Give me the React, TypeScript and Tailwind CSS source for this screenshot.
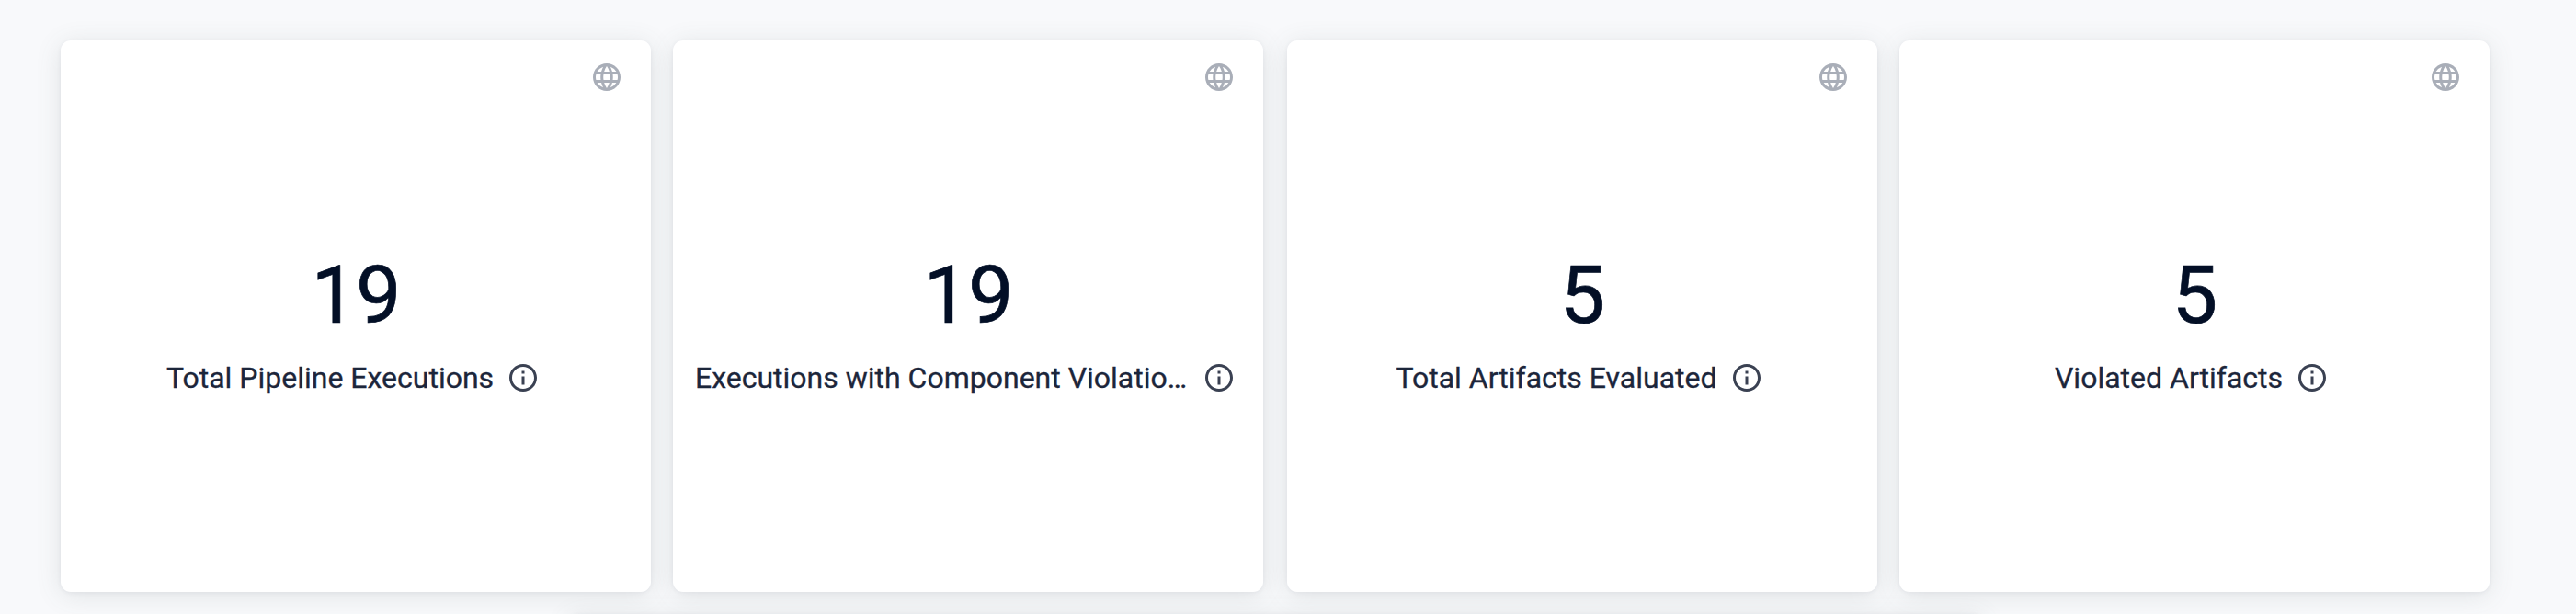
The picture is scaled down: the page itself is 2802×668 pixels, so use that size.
import { MdInfoOutline, MdLanguage } from "react-icons/md";

interface Metric {
  value: string;
  label: string;
}

const metricPairs: Metric[][] = [
  [
    { value: "19", label: "Total Pipeline Executions" },
    { value: "19", label: "Executions with Component Violations" },
  ],
  [
    { value: "5", label: "Total Artifacts Evaluated" },
    { value: "5", label: "Violated Artifacts" },
  ],
];

function MetricCard({ value, label }: Metric) {
  return (
    <section className="flex h-[600px] w-[642px] shrink-0 flex-col rounded-[11px] bg-white shadow-[0_1px_5px_rgba(40,41,61,0.06),0_4px_28px_rgba(88,98,98,0.14)]">
      <header className="flex h-[80px] items-center justify-end pr-[30px]">
        <MdLanguage size={36} className="text-[#a9aeb8]" />
      </header>
      <div className="mt-[145px] text-center text-[88px] leading-[104px] tracking-[-1px] text-[#030f26] [-webkit-text-stroke:0.7px_#030f26]">
        {value}
      </div>
      <div className="mt-[16px] flex items-center justify-center gap-[14px] pl-[20px] pr-[26px]">
        <span className="max-w-[538px] truncate text-[32px] leading-[44px] text-[#1c263b] [-webkit-text-stroke:0.3px_#1c263b]">
          {label}
        </span>
        <MdInfoOutline size={36} className="shrink-0 text-[#3a4152]" />
      </div>
    </section>
  );
}

export default function App() {
  return (
    <main className="h-[668px] w-[2802px] overflow-hidden bg-[#f8f9fb] pl-[66px] pt-[44px] font-[Roboto,sans-serif]">
      <div className="flex gap-[26px]">
        {metricPairs.map((pair) => (
          <div key={pair[0].label} className="flex gap-[24px]">
            {pair.map((metric) => (
              <MetricCard key={metric.label} {...metric} />
            ))}
          </div>
        ))}
      </div>
      <section className="ml-[552px] mt-[24px] h-[600px] w-[1540px] rounded-[11px] bg-white shadow-[0_1px_5px_rgba(40,41,61,0.06),0_4px_28px_rgba(88,98,98,0.14)]" />
    </main>
  );
}
